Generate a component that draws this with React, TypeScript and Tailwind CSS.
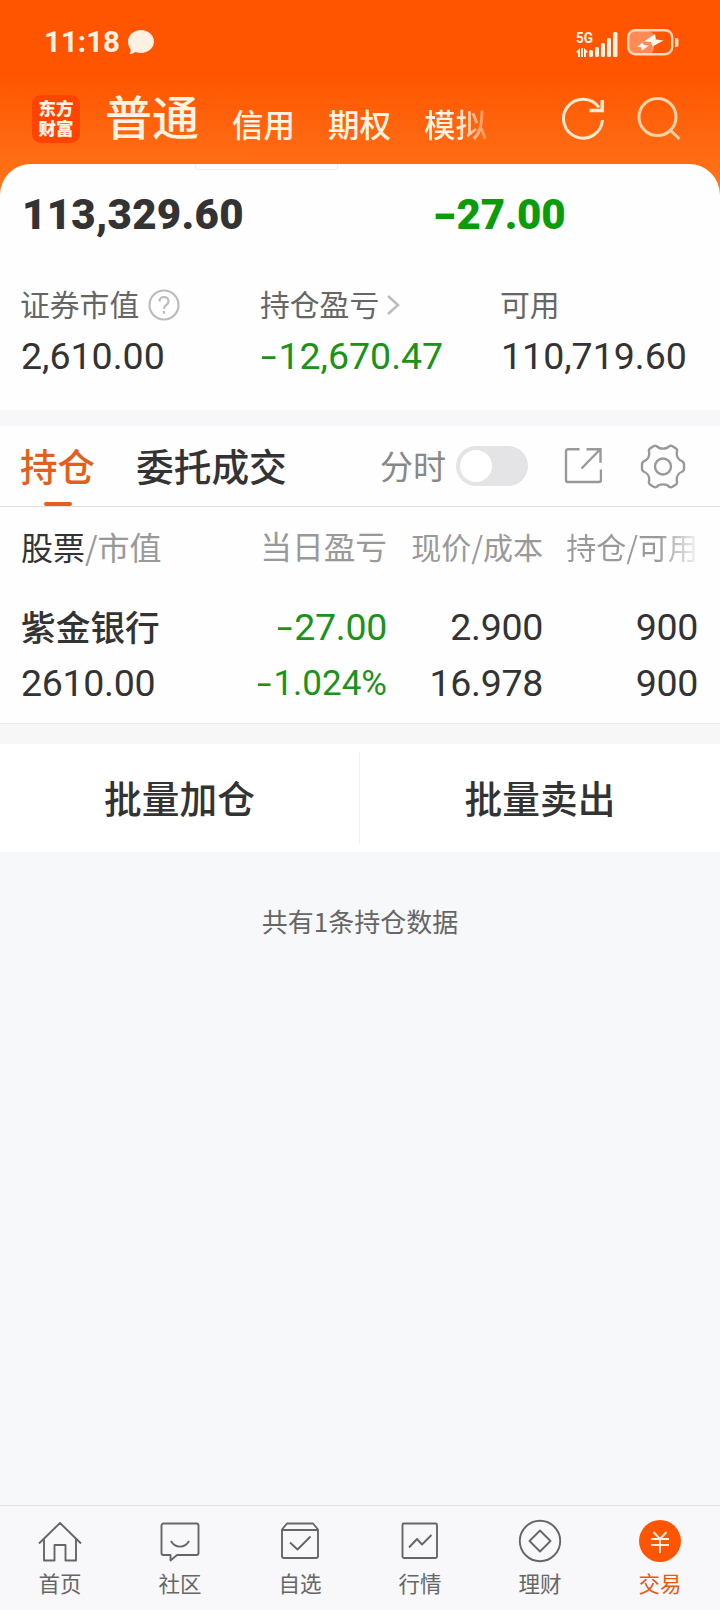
import type { ReactNode } from "react";
import clsx from "clsx";

const NUM = "font-['Roboto','Noto_Sans_CJK_SC',sans-serif]";

function StatusBar() {
  return (
    <div className="flex h-[84px] items-center pl-[44px] pr-[41px] text-[#fff1e2]">
      <span className={clsx(NUM, "w-[84px] whitespace-nowrap pt-[2px] text-[29.500px] font-bold leading-none")}>11:18</span>
      <svg width="26" height="25" viewBox="0 0 26 25" fill="currentColor">
        <path d="M13 0C20 0 26 5 26 11.500S20 23 13 23c-2 0-4-.4-5.700-1.100C5.500 23.200 3.500 24 1.500 24c1-1.300 1.300-3 1-4.900C.9 17 0 14.400 0 11.500 0 5 6 0 13 0Z" />
      </svg>
      <svg className="ml-auto overflow-visible" width="43" height="31" viewBox="0 -4 43 31" fill="currentColor">
        <text x="0" y="11.500" fontSize="15" fontWeight="700" fontFamily="Roboto" textLength="17" lengthAdjust="spacingAndGlyphs">5G</text>
        <path d="M0 21l4-4v9h-2v-4zM5 17h2v9H5zM8 17l4 4-2 1v4H8z" />
        <rect x="13" y="19" width="4" height="7" rx="1.500" />
        <rect x="19" y="16" width="4" height="10" rx="1.500" />
        <rect x="25" y="12" width="4" height="14" rx="1.500" />
        <rect x="31" y="7" width="4" height="19" rx="1.500" />
        <rect x="37" y="1" width="4.500" height="25" rx="1.500" />
      </svg>
      <svg className="ml-2" width="52" height="27" viewBox="0 0 52 27" fill="none">
        <rect x="2" y="2" width="25" height="23" rx="6" fill="#ff8a55" />
        <rect x="1.200" y="1.200" width="44" height="24" rx="7" stroke="#ffd9bd" strokeWidth="2.400" />
        <path d="M48 9h1.500a2 2 0 0 1 2 2v5a2 2 0 0 1-2 2H48z" fill="#ffd9bd" />
        <path d="M28 5L17 12.500l7 .5 1.500 4.500L36.500 11.500 29 10.500zM15.500 13.500L10 18l4 .2 1 3.300 7-5-5-.5z" fill="#fff5ea" />
      </svg>
    </div>
  );
}

function Header() {
  return (
    <header className="flex h-20 items-start pl-8 text-[#fff3e4]">
      <div className="mt-[11px] h-12 w-12 break-all rounded-[9px] bg-[#ff4400] px-[6px] pt-[3px] text-center text-[17.500px] font-black leading-[20px]">
        东方财富
      </div>
      <nav className="ml-[25px] flex w-[383px] whitespace-nowrap font-medium">
        <span className="w-[127px] pt-px text-[47px] leading-[60px]">普通</span>
        <span className="w-[96px] pt-[19px] text-[31.500px] leading-[40px]">信用</span>
        <span className="w-[96px] pt-[19px] text-[31.500px] leading-[40px]">期权</span>
        <span className="bg-gradient-to-r from-[#fff3e4] from-55% to-[#fff3e4]/30 bg-clip-text pt-[19px] text-[31.500px] leading-[40px] text-transparent">
          模拟
        </span>
      </nav>
      <svg className="ml-[74px] mt-[13px]" width="44" height="44" viewBox="0 0 44 44" fill="none" stroke="#ffe9d0" strokeWidth="3">
        <path d="M40.500 23A19.500 19.500 0 1 1 37 10.500" />
        <path d="M40.300 3v10.500H27.500" strokeWidth="3.500" />
      </svg>
      <svg className="ml-[31px] mt-[12px]" width="44" height="46" viewBox="0 0 44 46" fill="none" stroke="#ffd2a8" strokeWidth="3">
        <circle cx="20.500" cy="21" r="18.500" />
        <path d="M33.500 34.500L42.500 43" />
      </svg>
    </header>
  );
}

// Roboto's hyphen is narrow, so losses get a stretched one
function Loss({ value, className }: { value: string; className?: string }) {
  return (
    <span className={className}>
      <span className="mr-[7px] inline-block origin-left scale-x-[1.500]">-</span>
      {value}
    </span>
  );
}

function Summary() {
  return (
    <section className="h-[246px] overflow-hidden rounded-t-[31px] bg-[#fefefe]">
      <div className="ml-[195px] h-[6px] w-[143px] rounded-b-[4px] border border-t-0 border-[#ebefef]" />
      <div className={clsx(NUM, "mt-[20px] flex pl-[22px] text-[42px] font-black leading-[50px]")}>
        <span className="w-[409px] tracking-[0.300px] text-[#333]">113,329.60</span>
        <Loss className="tracking-[-0.300px] text-[#0a9c0a]" value="27.00" />
      </div>
      <div className="mt-[37px] grid grid-cols-[240px_240px_1fr] pl-[20px] text-[29.800px] leading-[52px] text-[#666]">
        <div className="flex items-center">
          证券市值
          <svg className="ml-[9px] mt-1" width="32" height="32" viewBox="0 0 32 32" fill="none" stroke="#bbb" strokeWidth="2.200">
            <circle cx="16" cy="16" r="14.500" />
            <path d="M11.500 12.500c0-6 9-6 9 0 0 3.500-4.500 3.500-4.500 7.500M16 22v2.800" />
          </svg>
        </div>
        <div className="flex items-center">
          持仓盈亏
          <svg className="ml-[7px] mt-1" width="14" height="20" viewBox="0 0 14 20" fill="none" stroke="#bbb" strokeWidth="2.400">
            <path d="M2 1l10 9-10 9" />
          </svg>
        </div>
        <div>可用</div>
      </div>
      <div className={clsx(NUM, "mt-[2px] grid grid-cols-[240px_240px_1fr] whitespace-nowrap pl-[21px] text-[37.500px] font-[450] leading-[50px] text-[#333]")}>
        <span>2,610.00</span>
        <Loss className="text-[#1a931a]" value="12,670.47" />
        <span>110,719.60</span>
      </div>
    </section>
  );
}

function Tabs() {
  return (
    <div className="flex h-[81px] items-start border-b border-[#dedede] bg-[#fefefe] pl-[21px]">
      <div className="flex w-[115px] flex-col text-[37.500px] font-medium leading-[56px] text-[#e55f1c]">
        <span className="-ml-px pt-[11px]">持仓</span>
        <span className="ml-[23px] mt-[9px] h-[4px] w-[28px] rounded-full bg-[#e55f1c]" />
      </div>
      <span className="w-[244px] pt-[11px] text-[37.700px] font-medium leading-[56px] text-[#333]">委托成交</span>
      <span className="w-[76px] pt-[11px] text-[33px] leading-[56px] text-[#888]">分时</span>
      <div className="mt-[20px] h-10 w-[72px] rounded-full bg-[#e4e4e6] p-1">
        <div className="h-8 w-8 rounded-full bg-white" />
      </div>
      <svg className="ml-[36px] mt-[21px]" width="38" height="38" viewBox="0 0 38 38" fill="none" stroke="#999" strokeWidth="2.400">
        <path d="M15.500 2.200H4a2 2 0 0 0-2 2V33a2 2 0 0 0 2 2h31a2 2 0 0 0 2-2V22.500M22.500 2.200H36.500v13.500M36 2.500L17.500 21.500" />
      </svg>
      <svg className="ml-[38px] mt-[18px]" width="46" height="46" viewBox="0 0 46 46" fill="none" stroke="#999" strokeWidth="2.400" strokeLinejoin="round">
        <circle cx="23" cy="22.500" r="8" />
        <path d="M16.500 2C19 5.500 27 5.500 29.500 2Q31 1.300 32.500 2.200L36 4.500Q37.500 5.800 37 7.500C36 12 38.500 16 42.500 17.500Q44 18.500 44 20V25Q44 26.500 42.500 27.500C38.500 29 36 33 37 37.500Q37.500 39.200 36 40.500L32.500 42.800Q31 43.700 29.500 43C27 39.500 19 39.500 16.500 43Q15 43.700 13.500 42.800L10 40.500Q8.500 39.200 9 37.500C10 33 7.500 29 3.500 27.500Q2 26.500 2 25V20Q2 18.500 3.500 17.500C7.500 16 10 12 9 7.500Q8.500 5.800 10 4.500L13.500 2.200Q15 1.300 16.500 2Z" />
      </svg>
    </div>
  );
}

function Holdings() {
  return (
    <section className="h-[217px] border-b border-[#ebebeb] bg-[#fefefe] pl-[21px] pr-[22px]">
      <div className="grid h-[78px] grid-cols-[1fr_156px_156px_155px] items-center whitespace-nowrap text-right text-[30px] text-[#999]">
        <span className="text-left text-[32px]">
          <span className="text-[#333]">股票</span>/市值
        </span>
        <span className="text-[31.700px]">当日盈亏</span>
        <span>现价/成本</span>
        <span className="ml-auto bg-gradient-to-r from-[#999] from-70% to-[#999]/10 bg-clip-text text-transparent">持仓/可用</span>
      </div>
      <div className={clsx(NUM, "grid grid-cols-[1fr_156px_156px_155px] items-center pt-[14px] text-right text-[37.500px] font-[450] leading-[56px] tracking-[-0.300px] text-[#333]")}>
        <span className="-mt-[2px] text-left font-['Noto_Sans_CJK_SC',sans-serif] text-[34.700px] font-medium tracking-normal">紫金银行</span>
        <Loss className="text-[#1a931a]" value="27.00" />
        <span>2.900</span>
        <span>900</span>
        <span className="text-left">2610.00</span>
        <Loss className="pt-[2px] text-[35px] leading-[54px] tracking-normal text-[#1a931a]" value="1.024%" />
        <span>16.978</span>
        <span>900</span>
      </div>
    </section>
  );
}

function NavItem({ label, active, children }: { label: string; active?: boolean; children: ReactNode }) {
  return (
    <div className={clsx("flex flex-1 flex-col items-center pt-[13px]", active ? "text-[#ee5510]" : "text-[#666]")}>
      <svg width="44" height="44" viewBox="0 0 44 44" fill="none" stroke="currentColor" strokeWidth="1.900" strokeLinejoin="round">
        {children}
      </svg>
      <span className="mt-[4px] text-[21.500px] leading-[32px]">{label}</span>
    </div>
  );
}

function BottomNav() {
  return (
    <nav className="flex h-[105px] border-t border-[#e2e4e6] bg-[#f8f8fa]">
      <NavItem label="首页">
        <path d="M1 24.500L22 4l21 20.500M6 20v21.500h10.500V26h11v15.500H38V20" />
      </NavItem>
      <NavItem label="社区">
        <path d="M5.500 4.500h33a2 2 0 0 1 2 2v27.500a2 2 0 0 1-2 2H19l-6.500 5.500V36h-7a2 2 0 0 1-2-2V6.500a2 2 0 0 1 2-2zM13 22c4 7.500 14 7.500 18 0" />
      </NavItem>
      <NavItem label="自选">
        <path d="M4 10.500l5-6h26l5 6v26.500a2 2 0 0 1-2 2H6a2 2 0 0 1-2-2zM4 11h36M12 23.500l7.500 7L32.500 17.500" />
      </NavItem>
      <NavItem label="行情">
        <rect x="4.500" y="4.500" width="34.500" height="34.500" rx="1.500" />
        <path d="M11 28.500l8-8.500 5 5.500 9.500-9.500" />
      </NavItem>
      <NavItem label="理财">
        <circle cx="22" cy="22" r="20.200" />
        <path d="M22 11.500L32.500 22 22 32.500 11.500 22z" />
      </NavItem>
      <NavItem label="交易" active>
        <circle cx="22" cy="22" r="21" fill="#ff5500" stroke="none" />
        <path d="M15.500 13l6.500 7 6.500-7M13 20h18M13 26h18M22 20v14" stroke="#ffeedd" />
      </NavItem>
    </nav>
  );
}

export default function App() {
  return (
    <div className="flex h-[1610px] w-[720px] flex-col overflow-hidden bg-[#f7f8fa] font-['Noto_Sans_CJK_SC',sans-serif]">
      <div className="bg-gradient-to-b from-[#ff5500] from-[75px] to-[#ff7419] to-[190px]">
        <StatusBar />
        <Header />
        <Summary />
      </div>
      <div className="h-4 bg-[#f7f7f9]" />
      <Tabs />
      <Holdings />
      <div className="h-[20px] bg-[#f7f7f7]" />
      <div className="grid h-[108px] grid-cols-2 bg-white text-center text-[37.700px] font-medium text-[#333]">
        <span className="my-2 border-r border-[#f0f0f0] leading-[90px]">批量加仓</span>
        <span className="my-2 leading-[90px]">批量卖出</span>
      </div>
      <p className="mt-[50px] text-center text-[26px] leading-[38px] text-[#666]">共有1条持仓数据</p>
      <div className="flex-1" />
      <BottomNav />
    </div>
  );
}
